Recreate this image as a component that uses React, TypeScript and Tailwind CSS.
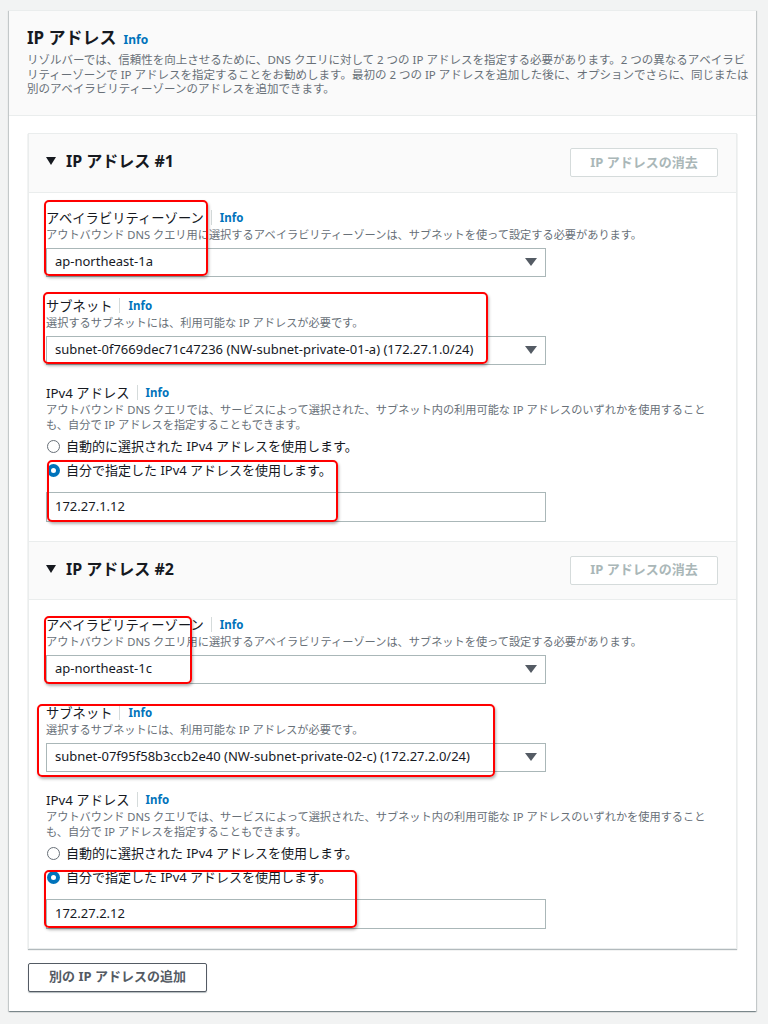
import React from "react";

const Info = ({ cls = "" }: { cls?: string }) => (
  <span className={"text-[11.5px] font-bold text-[#0073bb] " + cls}>Info</span>
);

const Label = ({ text }: { text: string }) => (
  <div className="flex h-[18px] items-center">
    <span className="text-[13.3px] leading-[18px] text-[#16191f]">{text}</span>
    <span className="ml-[7px] mr-[8px] h-[15px] border-l border-[#d5dbdb]" />
    <Info />
  </div>
);

const Caret = () => (
  <svg width="12" height="8" viewBox="0 0 12 8">
    <polygon points="0,0 12,0 6,8" fill="#545b64" />
  </svg>
);

const Select = ({ value }: { value: string }) => (
  <div className="mt-[6px] flex h-[29px] w-[500px] items-center justify-between border border-[#aab7b8] bg-white pl-[8px] pr-[8px]">
    <span className="whitespace-nowrap text-[13px] text-[#16191f]">{value}</span>
    <Caret />
  </div>
);

const Radio = ({ checked, text, cls }: { checked?: boolean; text: string; cls: string }) => (
  <div className={"flex h-[20px] items-center " + cls}>
    <span
      className={
        "ml-[1px] box-border inline-block h-[13px] w-[13px] rounded-full bg-white " +
        (checked ? "border-[4px] border-[#0073bb]" : "border-[1.5px] border-[#687078]")
      }
    />
    <span className="ml-[6px] whitespace-nowrap text-[13px] text-[#16191f]">{text}</span>
  </div>
);

const Section = ({
  n,
  az,
  subnet,
  ip,
  borderTop,
}: {
  n: number;
  az: string;
  subnet: string;
  ip: string;
  borderTop?: boolean;
}) => (
  <div>
    <div
      className={
        "flex h-[59px] items-center justify-between border-b border-[#eaeded] bg-[#fafafa] pl-[17px] pr-[18px] " +
        (borderTop ? "border-t" : "")
      }
    >
      <div className="mb-[3px] flex items-center">
        <svg width="10" height="8" viewBox="0 0 10 8" className="mr-[10px]">
          <polygon points="0,0 10,0 5,8" fill="#16191f" />
        </svg>
        <span className="text-[16px] font-bold text-[#16191f]">IP アドレス #{n}</span>
      </div>
      <div className="flex h-[29px] w-[148px] items-center justify-center rounded-[2px] border border-[#d5dbdb] bg-white text-[13px] font-bold text-[#aab7b8]">
        IP アドレスの消去
      </div>
    </div>
    <div className="px-[17px] pb-[19px] pt-[16px]">
      <div>
        <Label text="アベイラビリティーゾーン" />
        <div className="whitespace-nowrap text-[11.2px] leading-[15px] text-[#687078]">
          アウトバウンド DNS クエリ用に選択するアベイラビリティーゾーンは、サブネットを使って設定する必要があります。
        </div>
        <Select value={az} />
      </div>
      <div className="mt-[20px]">
        <Label text="サブネット" />
        <div className="whitespace-nowrap text-[11.2px] leading-[15px] text-[#687078]">
          選択するサブネットには、利用可能な IP アドレスが必要です。
        </div>
        <Select value={subnet} />
      </div>
      <div className="mt-[19px]">
        <Label text="IPv4 アドレス" />
        <div className="whitespace-nowrap text-[11.2px] leading-[15px] text-[#687078]">
          アウトバウンド DNS クエリでは、サービスによって選択された、サブネット内の利用可能な IP アドレスのいずれかを使用すること
          <br />
          も、自分で IP アドレスを指定することもできます。
        </div>
        <Radio cls="mt-[5px]" text="自動的に選択された IPv4 アドレスを使用します。" />
        <Radio cls="mt-[4px]" checked text="自分で指定した IPv4 アドレスを使用します。" />
        <div className="mt-[11px] flex h-[30px] w-[500px] items-center border border-[#aab7b8] bg-white pl-[8px]">
          <span className="text-[13px] text-[#16191f]">{ip}</span>
        </div>
      </div>
    </div>
  </div>
);

const RedBox = ({ cls }: { cls: string }) => (
  <div
    className={
      "pointer-events-none absolute rounded-[5px] border-2 border-[#ff0000] shadow-[1px_2px_3px_rgba(0,0,0,0.3)] " + cls
    }
  />
);

export default function App() {
  return (
    <div className="relative min-h-[1024px] w-[768px] bg-[#f2f3f3] pb-[14px] pl-[9px] pt-[10px] font-['Noto_Sans','Noto_Sans_CJK_JP',sans-serif]">
      <div className="w-[747px] border-t border-[#eaeded] bg-white shadow-[0_1px_1px_0_rgba(0,28,36,0.3),1px_1px_1px_0_rgba(0,28,36,0.15),-1px_1px_1px_0_rgba(0,28,36,0.15)]">
        <div className="border-b border-[#eaeded] bg-[#fafafa] pb-[18px] pl-[18px] pr-[10px] pt-[16px]">
          <div className="flex h-[22px] items-baseline">
            <h2 className="text-[17px] font-bold leading-[22px] text-[#16191f]">IP アドレス</h2>
            <Info cls="ml-[7px] text-[12px]" />
          </div>
          <div className="mt-[4px] whitespace-nowrap text-[11.5px] leading-[14.5px] text-[#687078]">
            リゾルバーでは、信頼性を向上させるために、DNS クエリに対して 2 つの IP アドレスを指定する必要があります。2 つの異なるアベイラビ
            <br />
            リティーゾーンで IP アドレスを指定することをお勧めします。最初の 2 つの IP アドレスを追加した後に、オプションでさらに、同じまたは
            <br />
            別のアベイラビリティーゾーンのアドレスを追加できます。
          </div>
        </div>
        <div className="px-[19px] pb-[19px] pt-[17px]">
          <div className="border border-[#eaeded] bg-white shadow-[0_1px_1px_0_rgba(0,28,36,0.3)]">
            <Section
              n={1}
              az="ap-northeast-1a"
              subnet="subnet-0f7669dec71c47236 (NW-subnet-private-01-a) (172.27.1.0/24)"
              ip="172.27.1.12"
            />
            <Section
              n={2}
              borderTop
              az="ap-northeast-1c"
              subnet="subnet-07f95f58b3ccb2e40 (NW-subnet-private-02-c) (172.27.2.0/24)"
              ip="172.27.2.12"
            />
          </div>
          <div className="mt-[14px] flex h-[29px] w-[179px] items-center justify-center rounded-[2px] border border-[#545b64] bg-white text-[13px] font-bold text-[#545b64] shadow-[0_1px_1px_0_rgba(0,28,36,0.3)]">
            別の IP アドレスの追加
          </div>
        </div>
      </div>

      <RedBox cls="left-[44px] top-[200px] h-[76px] w-[164px]" />
      <RedBox cls="left-[43px] top-[292px] h-[72px] w-[445px]" />
      <RedBox cls="left-[47px] top-[460px] h-[62px] w-[291px]" />
      <RedBox cls="left-[44px] top-[616px] h-[68px] w-[148px]" />
      <RedBox cls="left-[37px] top-[704px] h-[73px] w-[458px]" />
      <RedBox cls="left-[44px] top-[870px] h-[58px] w-[313px]" />
    </div>
  );
}
